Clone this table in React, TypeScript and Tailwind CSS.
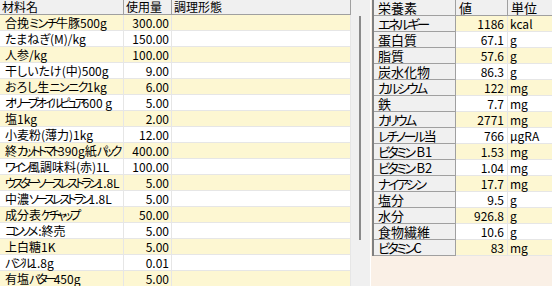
import React from "react";

// [name, qty, kana set wider (full-width in the source grid)]
const ingredients: [string, string, boolean?][] = [
  ["合挽ミンチ牛豚500g", "300.00", true],
  ["たまねぎ(M)/kg", "150.00"],
  ["人参/kg", "100.00"],
  ["干しいたけ(中)500g", "9.00"],
  ["おろし生ニンニク1kg", "6.00", true],
  ["オリーブオイルピュア600 g", "5.00"],
  ["塩1kg", "2.00"],
  ["小麦粉(薄力)1kg", "12.00"],
  ["終カットトマト390g紙パック", "400.00"],
  ["ワイン風調味料(赤)1L", "100.00"],
  ["ウスターソースレストラン1.8L", "5.00"],
  ["中濃ソースレストラン1.8L", "5.00"],
  ["成分表ケチャップ", "50.00"],
  ["コンソメ :終売", "5.00"],
  ["上白糖1K", "5.00"],
  ["バジル1.8g", "0.01"],
  ["有塩バター450g", "5.00"],
];

const nutrients: [string, string, string][] = [
  ["エネルギー", "1186", "kcal"],
  ["蛋白質", "67.1", "g"],
  ["脂質", "57.6", "g"],
  ["炭水化物", "86.3", "g"],
  ["カルシウム", "122", "mg"],
  ["鉄", "7.7", "mg"],
  ["カリウム", "2771", "mg"],
  ["レチノール当", "766", "μgRA"],
  ["ビタミン B1", "1.53", "mg"],
  ["ビタミン B2", "1.04", "mg"],
  ["ナイアシン", "17.7", "mg"],
  ["塩分", "9.5", "g"],
  ["水分", "926.8", "g"],
  ["食物繊維", "10.6", "g"],
  ["ビタミンC", "83", "mg"],
];

const rowBg = (i: number) => (i % 2 === 0 ? "bg-[#fdf7d2]" : "bg-white");

// katakana runs are set tight, like the narrow kana of the original grid font
const Jp = ({ text, kana }: { text: string; kana: string }) => (
  <>
    {text.split(/([\u30A0-\u30FF]+)/).map((p, i) =>
      /[\u30A0-\u30FF]/.test(p) ? (
        <span key={i} className={kana}>
          {p}
        </span>
      ) : (
        <React.Fragment key={i}>{p}</React.Fragment>
      )
    )}
  </>
);

export default function App() {
  return (
    <div className="flex h-[286px] w-[552px] overflow-hidden bg-[#f0f0f0] text-[12px] leading-[15px] text-black font-['Noto_Sans_CJK_JP',sans-serif] [font-feature-settings:'palt']">
      {/* 材料 grid */}
      <div className="flex w-[351px] shrink-0 flex-col">
        <div className="flex h-[15px] shrink-0 border-b border-[#a0a0a0] bg-[#f0f0f0] leading-[14px]">
          <div className="w-[124px] border-r border-[#a0a0a0] pl-[2px]">材料名</div>
          <div className="w-[48px] border-r border-[#a0a0a0] pl-[2px]">使用量</div>
          <div className="w-[179px] border-r border-[#a0a0a0] pl-[2px]">調理形態</div>
        </div>
        {ingredients.map(([name, qty, wide], i) => (
          <div key={i} className={`flex h-[16px] shrink-0 border-b border-[#e6e6e6] ${rowBg(i)}`}>
            <div className="w-[124px] whitespace-nowrap border-r border-[#e6e6e6] pl-[5px]">
              <Jp text={name} kana={wide ? "tracking-[-1.5px]" : "tracking-[-3px]"} />
            </div>
            <div className="w-[48px] border-r border-[#e6e6e6] pr-[2px] text-right">{qty}</div>
            <div className="w-[179px] border-r border-[#e6e6e6]"></div>
          </div>
        ))}
      </div>

      {/* splitter */}
      <div className="w-[19px] shrink-0 pl-[8px] pt-[16px]">
        <div className="h-[224px] w-[2px] bg-[#8a8a8a]"></div>
      </div>

      {/* 栄養素 panel */}
      <div className="flex-1 border-l border-white bg-[#faf0e6] pl-[1px]">
        <div className="border-l-2 border-[#808080]">
          <div className="flex h-[16px] border-b border-[#a0a0a0] bg-[#f0f0f0] text-[13px]">
            <div className="w-[82px] shrink-0 border-r border-[#a0a0a0] pl-[4px]">栄養素</div>
            <div className="w-[52px] shrink-0 border-r border-[#a0a0a0] pl-[3px]">値</div>
            <div className="flex-1 pl-[3px]">単位</div>
          </div>
          {nutrients.map(([name, val, unit], i) => (
            <div key={i} className="flex h-[16px]">
              <div className="w-[82px] shrink-0 whitespace-nowrap border-b border-r border-[#a0a0a0] bg-[#f0f0f0] pl-[4px] text-[13px]">
                <Jp text={name} kana="tracking-[-2.5px]" />
              </div>
              <div className={`w-[52px] shrink-0 border-b border-r border-[#e6e6e6] pr-[3px] text-right ${rowBg(i)}`}>{val}</div>
              <div className={`flex-1 border-b border-[#e6e6e6] pl-[2px] ${rowBg(i)}`}>{unit}</div>
            </div>
          ))}
        </div>
      </div>
    </div>
  );
}
